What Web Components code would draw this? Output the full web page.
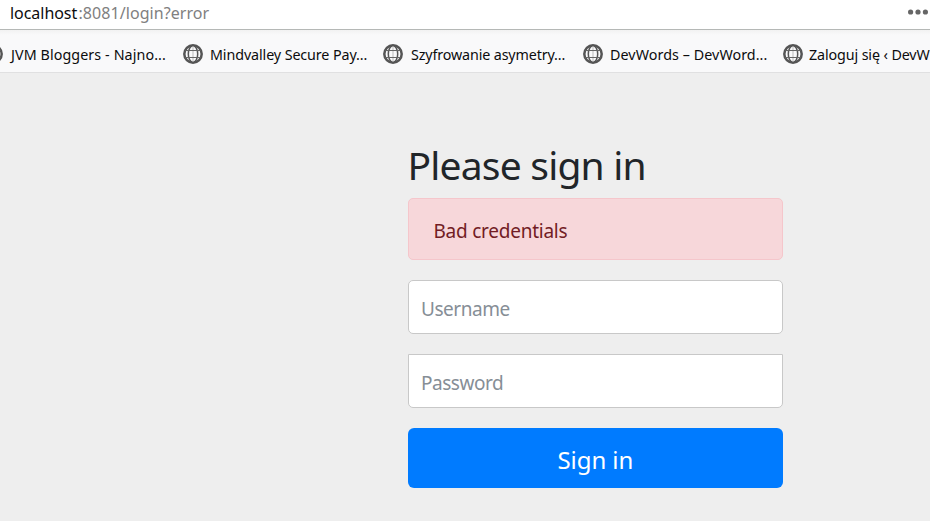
<!DOCTYPE html>
<html lang="pl">
<head>
<meta charset="utf-8">
<title>Please sign in</title>
<style>
html,body{margin:0;height:100%;overflow:hidden}
body{font-family:"Noto Sans","Open Sans",sans-serif;background:#eee}
</style>
</head>
<body>
<app-window></app-window>
<script>
function shadow(el, html){ el.attachShadow({mode:"open"}).innerHTML = html; }

// Text whose drawn glyphs span the given width, starting at the box's left edge.
const ctx = document.createElement("canvas").getContext("2d");
class FitText extends HTMLElement{
  connectedCallback(){
    const size = +this.getAttribute("size"), ink = +this.getAttribute("ink");
    const text = this.textContent;
    ctx.font = size + 'px "Noto Sans","Open Sans",sans-serif';
    const m = ctx.measureText(text);
    const ls = (ink - m.actualBoundingBoxRight - m.actualBoundingBoxLeft) / (text.length - 1);
    shadow(this, `<style>:host{display:block;flex:none;white-space:pre;width:${ink}px}
      span{display:block;font-size:${size}px;letter-spacing:${ls.toFixed(3)}px;margin-left:${m.actualBoundingBoxLeft.toFixed(2)}px}</style><span><slot></slot></span>`);
  }
}
customElements.define("fit-text", FitText);

customElements.define("globe-icon", class extends HTMLElement{
  connectedCallback(){ shadow(this, `<style>:host{display:block;width:20px;height:20px;flex:none}svg{display:block}</style>
  <svg width="20" height="20" viewBox="0 0 20 20" fill="none" stroke="#555">
    <circle cx="10" cy="10" r="8.7" stroke-width="2.5"/>
    <ellipse cx="10" cy="10" rx="4.7" ry="8.3" stroke-width="1.5"/>
    <path d="M10 2V18" stroke="#bbb" stroke-width="1"/>
    <path d="M2.3 6.5H17.7M2.3 13.5H17.7" stroke="#666" stroke-width="1.2"/>
  </svg>`); }
});

customElements.define("address-bar", class extends HTMLElement{
  connectedCallback(){ shadow(this, `<style>
    :host{display:flex;box-sizing:border-box;height:30px;background:#fff;border-bottom:1px solid #b5b8b6;padding:0 2px 0 11px;line-height:26px;color:#0c0c0d}
    .path{color:#808080;margin-left:2px} svg{margin:8px 0 0 auto;flex:none}</style>
    <fit-text size="16" ink="66.5">localhost</fit-text><fit-text class="path" size="16" ink="130">:8081/login?error</fit-text>
    <svg width="20" height="8" fill="#666"><circle cx="2.6" cy="4" r="2.6"/><circle cx="10" cy="4" r="2.6"/><circle cx="17.4" cy="4" r="2.6"/></svg>`); }
});

customElements.define("bookmark-item", class extends HTMLElement{
  connectedCallback(){ shadow(this, `<style>
    :host{display:flex;width:200px;flex:none;align-items:flex-start;gap:8px;line-height:24px}
    globe-icon{margin-top:1px}</style>
    <globe-icon></globe-icon><slot></slot>`); }
});

customElements.define("bookmarks-bar", class extends HTMLElement{
  connectedCallback(){ shadow(this, `<style>
    :host{display:flex;box-sizing:border-box;height:43px;background:linear-gradient(#f2f2f2,#f9f9fa 5px);border-bottom:1px solid #e0e0e1;padding-top:13px;overflow:hidden;color:#0c0c0d}
    bookmark-item:first-of-type{margin-left:-17px}
    .near{margin-left:-2px}</style>
    <bookmark-item><fit-text class="near" size="14.3" ink="156">JVM Bloggers - Najno...</fit-text></bookmark-item>
    <bookmark-item><fit-text size="14.3" ink="155.5">Mindvalley Secure Pay...</fit-text></bookmark-item>
    <bookmark-item><fit-text size="14.3" ink="153.5">Szyfrowanie asymetry...</fit-text></bookmark-item>
    <bookmark-item><fit-text size="14.3" ink="155.5">DevWords – DevWord...</fit-text></bookmark-item>
    <bookmark-item><fit-text class="near" size="14.3" ink="121.5">Zaloguj się ‹ DevW</fit-text></bookmark-item>`); }
});

customElements.define("alert-box", class extends HTMLElement{
  connectedCallback(){ shadow(this, `<style>
    :host{display:block;box-sizing:border-box;height:62px;border:1px solid #f5c6cb;border-radius:5px;background:#f7d7da;color:#721c24;padding:2px 25.5px 0;line-height:60px}</style><slot></slot>`); }
});

customElements.define("form-field", class extends HTMLElement{
  connectedCallback(){ shadow(this, `<style>
    :host{display:block;box-sizing:border-box;height:54px;border:1px solid #c8c8c8;border-radius:5px;background:#fff;color:#868e96;padding:2px 13px 0;line-height:52px;overflow:hidden}
    :host([flat-top]){border-radius:0 0 5px 5px}</style><slot></slot>`); }
});

customElements.define("submit-button", class extends HTMLElement{
  connectedCallback(){ shadow(this, `<style>
    :host{display:block}
    button{display:flex;justify-content:center;box-sizing:border-box;width:100%;height:60px;border:0;border-radius:6px;background:#007bff;color:#fff;padding:2px 1px 0 0;font-family:inherit;line-height:60px}</style><button type="button"><slot></slot></button>`); }
});

customElements.define("login-form", class extends HTMLElement{
  connectedCallback(){ shadow(this, `<style>
    :host{display:flex;flex-direction:column;gap:20px;width:375px;margin-left:408px;padding-top:68px}
    h1{margin:0 0 -11px;padding-left:2.5px;font-weight:400;line-height:48px;color:#212529}</style>
    <h1><fit-text size="39" ink="233">Please sign in</fit-text></h1>
    <alert-box><fit-text size="19" ink="133">Bad credentials</fit-text></alert-box>
    <form-field><fit-text size="19" ink="87.5">Username</fit-text></form-field>
    <form-field flat-top><fit-text size="19" ink="81">Password</fit-text></form-field>
    <submit-button><fit-text size="24" ink="73">Sign in</fit-text></submit-button>`); }
});

customElements.define("app-window", class extends HTMLElement{
  connectedCallback(){ shadow(this, `<style>:host{display:flex;flex-direction:column;height:521px;overflow:hidden;background:#eee}</style>
    <address-bar></address-bar><bookmarks-bar></bookmarks-bar><login-form></login-form>`); }
});
</script>
</body>
</html>
